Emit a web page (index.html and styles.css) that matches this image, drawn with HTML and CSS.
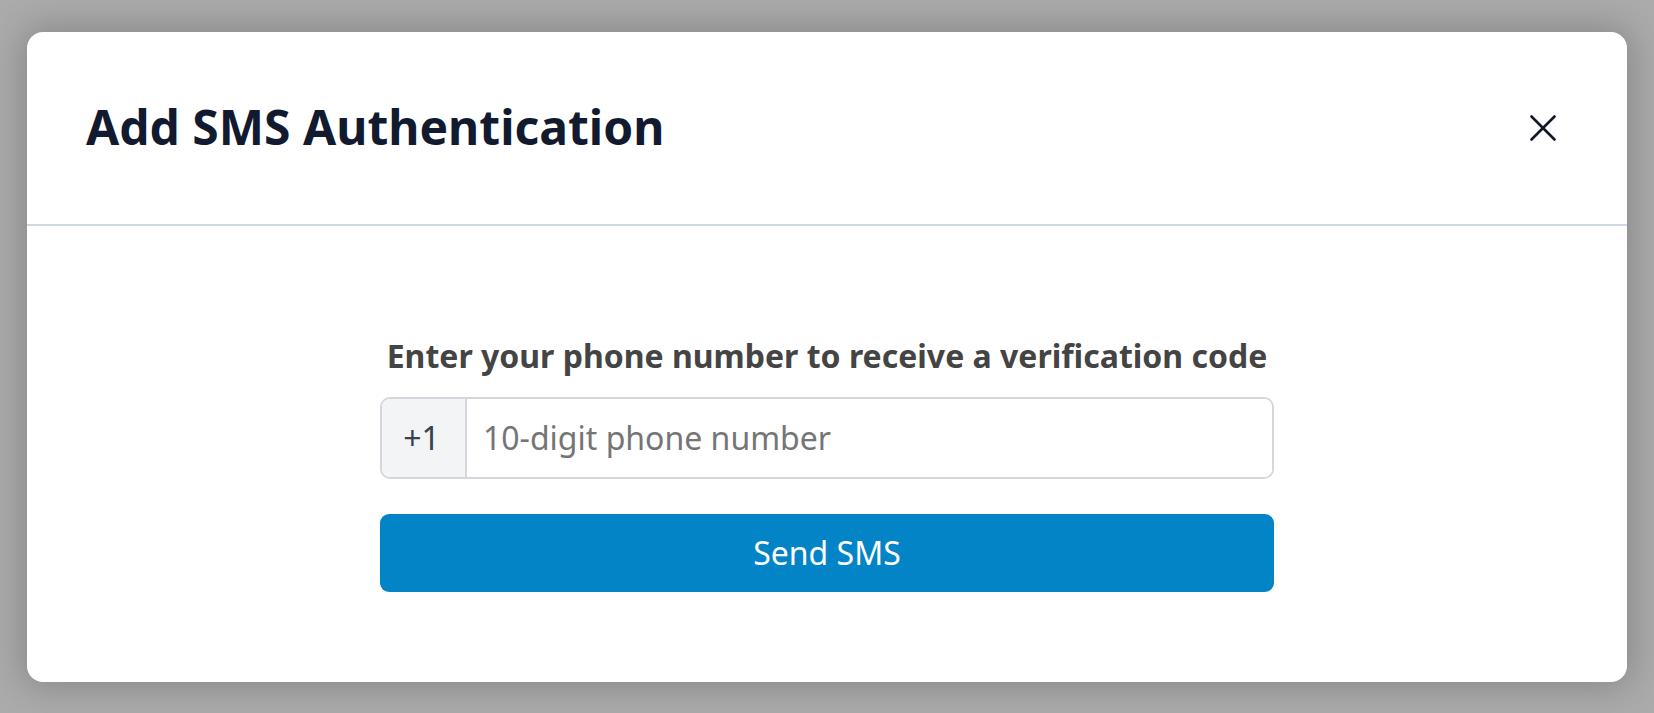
FILE: index.html
```html
<!DOCTYPE html>
<html lang="en">
<head>
<meta charset="utf-8">
<title>Add SMS Authentication</title>
<link rel="stylesheet" href="styles.css">
</head>
<body>
<div class="overlay">
  <div class="modal" role="dialog" aria-labelledby="modal-title">
    <header class="modal-header">
      <h2 id="modal-title" class="modal-title">Add SMS Authentication</h2>
      <button class="close-btn" aria-label="Close">
        <svg width="26" height="26" viewBox="0 0 26 26" fill="none" stroke="#111827" stroke-width="2.6" stroke-linecap="round">
          <path d="M1.5 1.5 L24.5 24.5 M24.5 1.5 L1.5 24.5"/>
        </svg>
      </button>
    </header>
    <div class="modal-body">
      <div class="form">
        <p class="prompt">Enter your phone number to receive a verification code</p>
        <div class="phone-field">
          <span class="prefix">+1</span>
          <input class="phone-input" type="tel" placeholder="10-digit phone number">
        </div>
        <button class="send-btn">Send SMS</button>
      </div>
    </div>
  </div>
</div>
</body>
</html>
```

FILE: styles.css
```css
html, body {
  margin: 0;
  padding: 0;
  height: 100%;
}

body {
  background: #ababab;
  font-family: "Noto Sans", "Open Sans", Arial, sans-serif;
  overflow: hidden;
}

.overlay {
  height: 100%;
  display: flex;
  align-items: center;
  justify-content: center;
}

.modal {
  width: 1600px;
  height: 650px;
  background: #ffffff;
  border-radius: 16px;
  box-shadow: 0 0 36px 4px rgba(0, 0, 0, 0.22);
  display: flex;
  flex-direction: column;
  overflow: hidden;
}

.modal-header {
  height: 194px;
  box-sizing: border-box;
  padding: 0 60px 0 59px;
  display: flex;
  align-items: center;
  justify-content: space-between;
  border-bottom: 2px solid #cfd8e3;
}

.modal-title {
  margin: 0;
  font-size: 48px;
  font-weight: 700;
  color: #111a2e;
  letter-spacing: 0;
  line-height: 64px;
  padding-bottom: 2px;
}

.close-btn {
  background: none;
  border: none;
  padding: 0;
  margin-right: 11px;
  width: 26px;
  height: 26px;
  display: flex;
  align-items: center;
  justify-content: center;
  cursor: pointer;
}

.modal-body {
  flex: 1;
  padding-top: 110px;
}

.form {
  width: 894px;
  margin: 0 auto;
  display: flex;
  flex-direction: column;
}

.prompt {
  margin: 0 0 21px;
  text-align: center;
  font-size: 32px;
  line-height: 40px;
  font-weight: 700;
  color: #444444;
}

.phone-field {
  display: flex;
  height: 82px;
  box-sizing: border-box;
  border: 2px solid #d4d7dc;
  border-radius: 10px;
  overflow: hidden;
}

.prefix {
  width: 85px;
  box-sizing: border-box;
  background: #f3f4f6;
  border-right: 2px solid #d4d7dc;
  display: flex;
  align-items: center;
  justify-content: center;
  font-size: 32px;
  color: #374151;
  padding-right: 4px;
}

.phone-input {
  flex: 1;
  border: none;
  outline: none;
  padding: 0 16px;
  font-family: inherit;
  font-size: 32px;
  color: #111827;
  background: #ffffff;
}

.phone-input::placeholder {
  color: #757575;
}

.send-btn {
  margin-top: 35px;
  height: 78px;
  border: none;
  border-radius: 9px;
  background: #0284c7;
  color: #ffffff;
  font-family: inherit;
  font-size: 32px;
  font-weight: 400;
  cursor: pointer;
}
```
